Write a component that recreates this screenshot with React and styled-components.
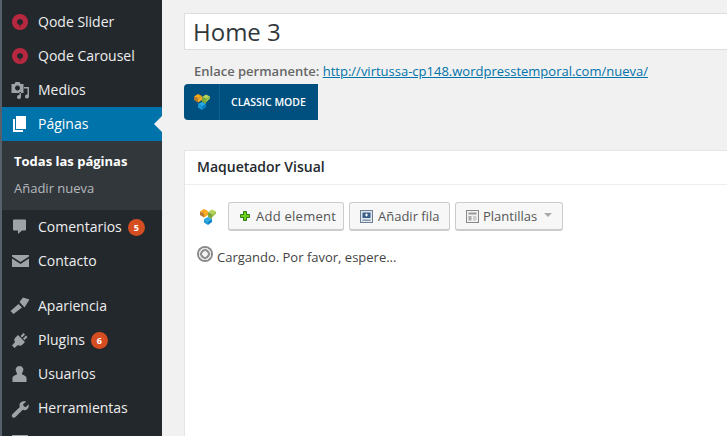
import React from 'react'
import styled, { createGlobalStyle } from 'styled-components'

const GlobalStyle = createGlobalStyle`
  html, body {
    margin: 0;
    height: 436px;
    overflow: hidden;
    background: #f1f1f1;
    font-family: "Open Sans", sans-serif;
    -webkit-font-smoothing: antialiased;
  }
`

const Shell = styled.div`
  display: flex;
  width: 727px;
  height: 436px;
  overflow: hidden;
`

const Edge = styled.div`
  width: 2px;
  flex: none;
  background: #56606a;
`

const Sidebar = styled.nav`
  width: 160px;
  flex: none;
  padding-top: 5px;
  background: #23282d;
`

const MenuRow = styled.div`
  position: relative;
  display: flex;
  align-items: center;
  height: 34px;
  padding-left: 8px;
  color: ${p => (p.$active ? '#fff' : '#eee')};
  background: ${p => (p.$active ? '#0073aa' : 'transparent')};
  font-size: 14px;
  ${p => p.$active && `
    &::after {
      content: '';
      position: absolute;
      right: 0;
      top: 9px;
      border: 8px solid transparent;
      border-right-color: #f1f1f1;
      border-left-width: 0;
    }
  `}
`

const MenuLabel = styled.span`
  padding-bottom: 2px;
`

const MenuIcon = styled.svg`
  width: 20px;
  height: 20px;
  flex: none;
  margin-right: 8px;
  fill: ${p => p.$color || '#9ea3a8'};
`

const Badge = styled.span`
  display: inline-flex;
  align-items: center;
  justify-content: center;
  width: 17px;
  height: 17px;
  margin-left: 6px;
  border-radius: 50%;
  background: #d54e21;
  color: #fff;
  font-size: 9px;
  font-weight: 700;
`

const Separator = styled.div`
  height: 11px;
`

const Submenu = styled.div`
  height: 69px;
  box-sizing: border-box;
  padding: 7px 0 0 12px;
  background: #32373c;
`

const SubItem = styled.div`
  height: 27px;
  line-height: 27px;
  font-size: 13px;
  font-weight: ${p => (p.$current ? 700 : 400)};
  color: ${p => (p.$current ? '#fff' : '#b4b9be')};
`

const Main = styled.main`
  flex: 1;
  min-width: 0;
  padding: 13px 0 0 22px;
`

const TitleInput = styled.div`
  box-sizing: border-box;
  height: 37px;
  margin-right: -4px;
  padding-left: 8px;
  line-height: 35px;
  border: 1px solid #ddd;
  background: #fff;
  color: #32373c;
  font-size: 24px;
`

const Permalink = styled.div`
  margin: 12px 0 0 10px;
  height: 18px;
  line-height: 18px;
  font-size: 13px;
  color: #666;

  b {
    font-weight: 600;
  }

  a {
    color: #0073aa;
    text-decoration: underline;
  }
`

const ClassicButton = styled.div`
  display: flex;
  align-items: center;
  width: 134px;
  height: 36px;
  margin-top: 4px;
  border-radius: 4px 0 0 4px;
  background: #00507f;
  color: #fff;
  font-size: 10.5px;
  font-weight: 600;
`

const ClassicLogo = styled.div`
  display: flex;
  align-items: center;
  justify-content: center;
  width: 36px;
  height: 100%;
  margin-right: 11px;
  border-right: 1px solid #0a6391;
  box-sizing: border-box;
`

const Panel = styled.section`
  height: 320px;
  margin: 30px -4px 0 0;
  border: 1px solid #e5e5e5;
  background: #fff;
`

const PanelHeader = styled.h2`
  margin: 0;
  height: 33px;
  padding-left: 12px;
  line-height: 31px;
  border-bottom: 1px solid #eee;
  color: #23282d;
  font-size: 14px;
  font-weight: 600;
`

const Toolbar = styled.div`
  display: flex;
  align-items: center;
  gap: 5px;
  padding: 17px 0 0 15px;
`

const ToolButton = styled.div`
  display: flex;
  align-items: center;
  box-sizing: border-box;
  width: ${p => p.$width}px;
  height: 29px;
  padding-left: 10px;
  border: 1px solid #ccc;
  border-bottom-width: 2px;
  border-radius: 3px;
  background: #f7f7f7;
  color: #555;
  font-size: 13px;
  letter-spacing: ${p => p.$spacing || 0}px;
`

const ToolLogo = styled.div`
  display: flex;
  width: 16px;
  margin-right: 7px;
`

const ToolIcon = styled.svg`
  width: 13px;
  height: 13px;
  flex: none;
  margin-right: ${p => p.$gap || 5}px;
`

const Caret = styled.span`
  width: 0;
  height: 0;
  margin: -3px 0 0 7px;
  border: 4px solid transparent;
  border-top-color: #aaa;
  border-bottom-width: 0;
`

const Loading = styled.div`
  display: flex;
  align-items: flex-start;
  gap: 4px;
  padding: 15px 0 0 12px;
  color: #444;
  font-size: 13px;
  line-height: 18px;
`

const LoadingText = styled.span`
  margin-top: 2px;
`

const Spinner = styled.span`
  width: 16px;
  height: 16px;
  flex: none;
  border-radius: 50%;
  background: radial-gradient(circle, #f2f2f2 0 2.5px, #8f8f8f 3px 4.5px, #e4e4e4 5px 6px, #8a8a8a 6.5px 8px);
`

const VcLogo = () => (
  <svg width="16" height="16" viewBox="0 0 16 16">
    <path fill="#f9a51a" d="M0 2.5L4 0l4 2-4 2.5z" />
    <path fill="#f7a823" d="M4 4.5L8 2v4L4 8.5z" />
    <path fill="#b97a2e" d="M0 2.5l4 2v4L0 6z" />
    <path fill="#b7d45a" d="M8 3l4-2.500 4 2L12 5z" />
    <path fill="#9cc24a" d="M12 5l4-2.500v2L12 8.500z" />
    <path fill="#7ba83a" d="M8 3l4 2v5L8 8z" />
    <path fill="#29abe2" d="M4 10l4-2 4 2-4 2.500z" />
    <path fill="#1c9ad6" d="M4 10l4 2.500V16l-4-2.500z" />
    <path fill="#0b83c9" d="M8 12.500L12 10v3l-4 3z" />
  </svg>
)

const QodeIcon = () => (
  <MenuIcon viewBox="0 0 20 20" $color="#b5283f">
    <path fillRule="evenodd" d="M10 2a8 8 0 1 1-.01 0zM10 7a3 3 0 1 0 .01 0z" />
    <path fill="#23282d" d="M9.400 12.500h1.200l-.6 3.500z" />
  </MenuIcon>
)

const icons = {
  media: 'M1.500 4h3l1-2h4l1 2h3v9h-12zM7.500 5.500a2.500 2.500 0 1 0 .01 0zM9.500 12H11v5a2 2 0 1 1-1.500-1.900zM14 7h5v9.500a2 2 0 1 1-1.500-1.900V8.500H14z',
  pages: 'M6 2h10v13H6zM3 5h2v11h8v2H3z',
  comment: 'M4 2.500h11a1 1 0 0 1 1 1v9a1 1 0 0 1-1 1h-3L8 17v-3.500H4a1 1 0 0 1-1-1v-9a1 1 0 0 1 1-1z',
  mail: 'M2 4h17v1.500L10.500 11 2 5.500zM2 7.500l8.500 5.500L19 7.500V16H2z',
  brush: 'M9.500 6L13 1.500l6.500 2-5 8zM8.500 8l3.500 3.500-2 1.500-6.500 5L.5 15z',
  plugin: 'M8 5l7 7-2.500 2.500a3.500 3.500 0 0 1-4.500.5L4.500 18 2 15.500 5 12a3.500 3.500 0 0 1 .5-4.500zM10.500 6l3-3L15 4.500l-3 3zM13 8.500l3-3L17.500 7l-3 3z',
  user: 'M9.500 2a4 4 0 0 1 3 6.600c-.6.8-.8 1.400-.2 1.900 1.500.8 4.200 1.500 4.200 3.500v4h-14v-4c0-2 2.700-2.700 4.200-3.500.6-.5.4-1.100-.2-1.900A4 4 0 0 1 9.500 2z',
  wrench: 'M16.200 3.600L13 6.500l.9 1.900 1.900.7 2.900-2.900c.4 2.200-.2 3.900-1.500 5-1.300 1-2.800 1.200-4.400.6L5.500 19c-1 1-2.400 1-3.100.2-.9-.9-.8-2.200.2-3.100l7.200-7c-.6-1.600-.4-3.300.8-4.500 1.300-1.200 3.300-1.600 5.600-1z',
  screen: 'M2 3h16v12h-6v2h2v1H6v-1h2v-2H2z',
}

const MenuItem = ({ icon, label, badge, active }) => (
  <MenuRow $active={active}>
    {icon === 'qode' ? <QodeIcon /> : (
      <MenuIcon viewBox="0 0 20 20" $color={active ? '#fff' : undefined}>
        <path fillRule="evenodd" d={icons[icon]} />
      </MenuIcon>
    )}
    <MenuLabel>{label}</MenuLabel>
    {badge && <Badge>{badge}</Badge>}
  </MenuRow>
)

export default function App() {
  return (
    <Shell>
      <GlobalStyle />
      <Edge />
      <Sidebar>
        <MenuItem icon="qode" label="Qode Slider" />
        <MenuItem icon="qode" label="Qode Carousel" />
        <MenuItem icon="media" label="Medios" />
        <MenuItem icon="pages" label="Páginas" active />
        <Submenu>
          <SubItem $current>Todas las páginas</SubItem>
          <SubItem>Añadir nueva</SubItem>
        </Submenu>
        <MenuItem icon="comment" label="Comentarios" badge="5" />
        <MenuItem icon="mail" label="Contacto" />
        <Separator />
        <MenuItem icon="brush" label="Apariencia" />
        <MenuItem icon="plugin" label="Plugins" badge="6" />
        <MenuItem icon="user" label="Usuarios" />
        <MenuItem icon="wrench" label="Herramientas" />
        <MenuItem icon="screen" label="" />
      </Sidebar>
      <Main>
        <TitleInput>Home 3</TitleInput>
        <Permalink>
          <b>Enlace permanente:</b> <a>http://virtussa-cp148.wordpresstemporal.com/nueva/</a>
        </Permalink>
        <ClassicButton>
          <ClassicLogo><VcLogo /></ClassicLogo>
          CLASSIC MODE
        </ClassicButton>
        <Panel>
          <PanelHeader>Maquetador Visual</PanelHeader>
          <Toolbar>
            <ToolLogo><VcLogo /></ToolLogo>
            <ToolButton $width={116} $spacing={0.25}>
              <ToolIcon viewBox="0 0 13 13" $gap={4}>
                <path fill="#6fd01e" stroke="#2f7d12" d="M4.500 1.500h3v3h3v3h-3v3h-3v-3h-3v-3h3z" />
              </ToolIcon>
              Add element
            </ToolButton>
            <ToolButton $width={101}>
              <ToolIcon viewBox="0 0 13 13">
                <rect x="0.500" y="0.500" width="12" height="12" fill="#dfe6ee" stroke="#6d7f92" />
                <rect x="2.500" y="2.500" width="8" height="5.500" fill="#3a5f8a" />
                <path fill="#fff" d="M6 3.500h1v1h1v1H7v1H6v-1H5v-1h1z" />
                <rect x="2.500" y="9.500" width="8" height="1.500" fill="#8b9aab" />
              </ToolIcon>
              Añadir fila
            </ToolButton>
            <ToolButton $width={108}>
              <ToolIcon viewBox="0 0 13 13" $gap={4}>
                <rect x="0.500" y="0.500" width="12" height="12" fill="#f2f2f2" stroke="#888" />
                <rect x="2.500" y="2.500" width="8" height="2" fill="#999" />
                <rect x="2.500" y="6" width="3" height="4.500" fill="#aaa" />
                <rect x="7" y="6" width="3.500" height="4.500" fill="#ccc" />
              </ToolIcon>
              Plantillas
              <Caret />
            </ToolButton>
          </Toolbar>
          <Loading>
            <Spinner />
            <LoadingText>Cargando. Por favor, espere...</LoadingText>
          </Loading>
        </Panel>
      </Main>
    </Shell>
  )
}
